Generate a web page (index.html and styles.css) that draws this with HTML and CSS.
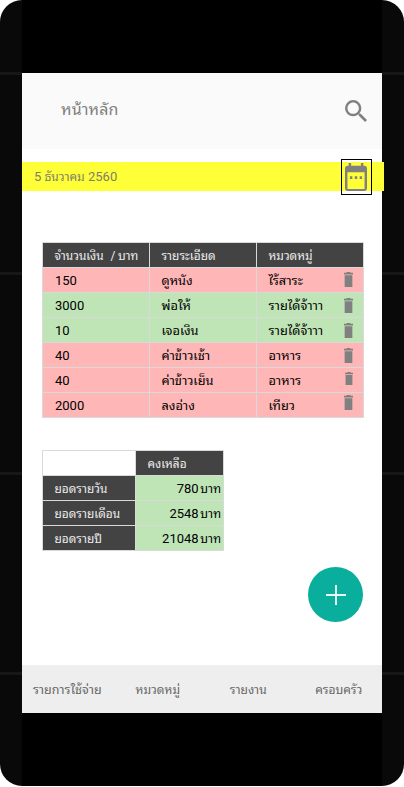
FILE: index.html
```html
<!DOCTYPE html>
<html lang="th">
<head>
<meta charset="utf-8">
<title>หน้าหลัก</title>
<link rel="stylesheet" href="styles.css">
</head>
<body>
<svg class="defs" width="0" height="0"><symbol id="trash" viewBox="5 3 14 18" preserveAspectRatio="none"><path d="M6 21h12V7H6v14zM19 4h-3.500l-1-1h-5l-1 1H5v2h14V4z"/></symbol></svg>
<div class="phone">
  <main class="screen">
    <header class="bar">
      <h1>หน้าหลัก</h1>
      <svg class="search" viewBox="3 3 17.500 17.500"><path d="M15.500 14h-.79l-.28-.27A6.471 6.471 0 0 0 16 9.500 6.500 6.500 0 1 0 9.500 16c1.610 0 3.090-.59 4.230-1.570l.27.28v.79l5 4.990L20.490 19l-4.990-5zm-6 0C7.010 14 5 11.990 5 9.500S7.010 5 9.500 5 14 7.010 14 9.500 11.990 14 9.500 14z"/></svg>
    </header>
    <div class="date">
      <span>5 <span class="month">ธันวาคม</span> 2560</span>
      <span class="pick"><svg viewBox="3 1 18 21" preserveAspectRatio="none"><path d="M9 11H7v2h2v-2zm4 0h-2v2h2v-2zm4 0h-2v2h2v-2zm2-8h-1V1h-2v2H8V1H6v2H5c-1.110 0-2 .9-2 2v15c0 1.100.89 2 2 2h14c1.100 0 2-.9 2-2V5c0-1.100-.9-2-2-2zm0 17.500H5V8h14v12.500z"/></svg></span>
    </div>
    <div class="grid list">
      <div class="head"><span>จำนวนเงิน <span class="slash">/</span> บาท</span></div><div class="head">รายระเอียด</div><div class="head">หมวดหมู่</div>
      <div class="out num">150</div><div class="out">ดูหนัง</div><div class="out">ไร้สาระ<svg class="bin"><use href="#trash"/></svg></div>
      <div class="in num">3000</div><div class="in">พ่อให้</div><div class="in">รายได้จ้าาา<svg class="bin low"><use href="#trash"/></svg></div>
      <div class="in num">10</div><div class="in">เจอเงิน</div><div class="in">รายได้จ้าาา<svg class="bin low"><use href="#trash"/></svg></div>
      <div class="out num">40</div><div class="out">ค่าข้าวเช้า</div><div class="out">อาหาร<svg class="bin low"><use href="#trash"/></svg></div>
      <div class="out num">40</div><div class="out">ค่าข้าวเย็น</div><div class="out">อาหาร<svg class="bin small"><use href="#trash"/></svg></div>
      <div class="out num">2000</div><div class="out">ลงอ่าง</div><div class="out">เทียว<svg class="bin high"><use href="#trash"/></svg></div>
    </div>
    <div class="grid totals">
      <div class="blank"></div><div class="head">คงเหลือ</div>
      <div class="head">ยอดรายวัน</div><div class="in sum"><span>780 <span class="unit">บาท</span></span></div>
      <div class="head">ยอดรายเดือน</div><div class="in sum"><span>2548 <span class="unit">บาท</span></span></div>
      <div class="head">ยอดรายปี</div><div class="in sum"><span>21048 <span class="unit">บาท</span></span></div>
    </div>
    <button class="add" aria-label="+"><svg viewBox="0 0 20 20"><path d="M9 0h2v9h9v2h-9v9H9v-9H0V9h9z"/></svg></button>
    <nav>
      <a class="wide">รายการใช้จ่าย</a><a>หมวดหมู่</a><a>รายงาน</a><a>ครอบครัว</a>
    </nav>
  </main>
</div>
</body>
</html>
```
FILE: styles.css
```css
* { box-sizing: border-box; }
body { margin: 0; background: #fff; font: 13px/24px Roboto, "Noto Sans Thai Looped", "Noto Looped Thai", "Leelawadee UI", Loma, Garuda, Waree, Umpush, "Tlwg Typo", "Noto Serif Thai", sans-serif; color: #000; overflow: hidden; }
.defs { position: absolute; }
.phone {
  width: 404px; height: 786px; padding: 73px 22px; border-radius: 22px;
  background:
    linear-gradient(#000, #000) 22px 0 / 360px 100% no-repeat,
    repeating-linear-gradient(transparent 0 71.500px, #171717 72.500px 74.500px, transparent 75px 200px) 0 0 / 100% 100%,
    #090909;
}
.screen { width: 360px; height: 640px; background: #fff; display: flex; flex-direction: column; }
.bar { height: 76px; flex: none; background: #fafafa; display: flex; justify-content: space-between; padding: 25px 15px 0 39px; }
h1 { margin: 0; font-size: 16px; line-height: 24px; font-weight: 400; letter-spacing: .1px; color: #808080; }
.search { width: 22px; height: 22px; margin-top: 1.500px; fill: #808080; }
.date { width: 362px; height: 29px; flex: none; margin-top: 13px; padding: 0 12px; background: #ffff38; color: #80806a; display: flex; justify-content: space-between; align-items: center; }
.month { font-size: 12px; }
.pick { width: 31px; height: 36px; border: 1px solid #000; padding: 3px; }
.pick svg { display: block; width: 22px; height: 28px; fill: #808080; }
.grid { display: grid; gap: 1px; padding: 1px; background: #d9d9d9; margin-left: 20px; flex: none; grid-auto-rows: 24px; }
.list { grid-template-columns: repeat(3, 106px); width: 322px; margin-top: 51px; }
.totals { grid-template-columns: 92px 87px; width: 182px; margin-top: 32px; }
.grid > div { padding: 1px 10px 0 11.500px; display: flex; justify-content: space-between; white-space: nowrap; font-size: 12.800px; }
.grid .head { background: #434343; color: #eee; font-size: 11.900px; }
.grid .num { padding-left: 12px; font-size: 13px; }
.slash { margin: 0 -.5px 0 4px; }
.grid .out { background: #ffb6b6; }
.grid .in { background: #bfe5b7; }
.grid .blank { background: #fff; }
.grid .sum { justify-content: flex-end; padding-right: 2px; word-spacing: -1.500px; font-size: 13px; }
.unit { font-size: 12px; }
.bin { width: 9px; height: 15px; margin-top: 3px; fill: #808080; }
.bin.low { margin-top: 4px; }
.bin.high { margin-top: 1px; }
.bin.small { width: 8px; height: 13px; }
.add { width: 55px; height: 55px; border: 0; padding: 18px; border-radius: 50%; background: #0aae9d; margin: 16px 0 0 286px; flex: none; }
.add svg { display: block; width: 20px; height: 20px; fill: #e8f7f5; }
nav { height: 48px; flex: none; margin-top: auto; padding-top: 1px; background: #eee; display: grid; grid-template-columns: repeat(4, 90.500px); align-items: center; text-align: center; color: #666; font-size: 12px; }
nav .wide { font-size: 12.500px; }
```
